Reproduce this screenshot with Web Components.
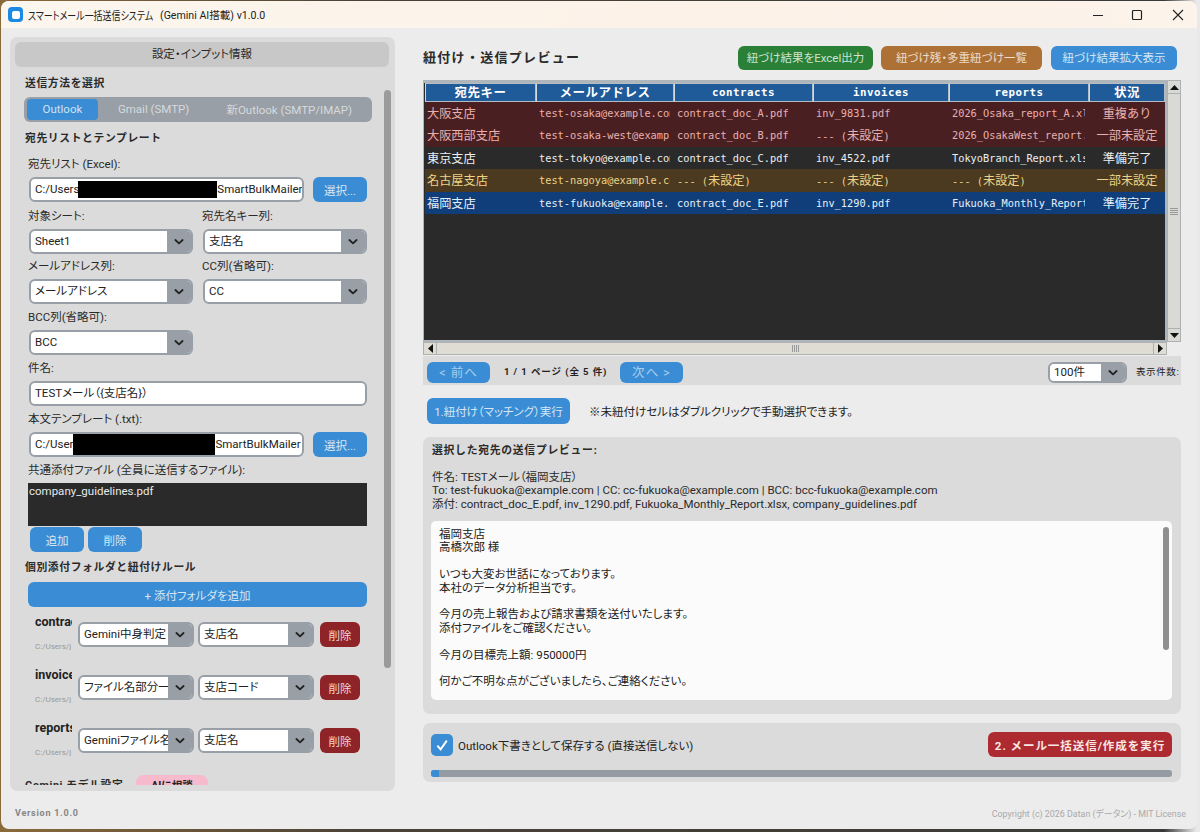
<!DOCTYPE html>
<html lang="ja">
<head>
<meta charset="utf-8">
<title>スマートメール一括送信システム</title>
<style>
html, body { margin: 0; height: 100%; }
body {
    width: 1200px; height: 832px; overflow: hidden;
    background: linear-gradient(90deg, #8a6a3a 0, #4a4238 30%, #3a3a38 97%, #e9e9e9 99.7%);
    font: 11.5px Roboto, "Noto Sans CJK JP", sans-serif;
    color: #222;
}
</style>
</head>
<body>
<app-window></app-window>
<script>
const FONT = 'Roboto, "Noto Sans CJK JP", sans-serif';
const CHEVRON = '<svg width="10" height="6" viewBox="0 0 10 6"><path d="M1.4 1 5 4.4 8.6 1" fill="none" stroke="#222" stroke-width="1.8" stroke-linecap="round" stroke-linejoin="round"/></svg>';

function define(name, css, html) {
    customElements.define(name, class extends HTMLElement {
        connectedCallback() {
            if (this.shadowRoot) return;
            this.attachShadow({ mode: "open" });
            const template = document.createElement("template");
            const markup = typeof html === "function" ? html(this) : html;
            template.innerHTML = `<style>${css}</style>${markup}`;
            this.shadowRoot.appendChild(template.content.cloneNode(true));
        }
    });
}

/* 共通部品 */
define("ui-btn", `
    :host { display: inline-flex; align-items: center; justify-content: center; height: 25px; box-sizing: border-box;
        border-radius: 6px; background: var(--bg, #3a8dd4); color: var(--fg, #d5e6f5); font-size: 11.5px; white-space: nowrap; font-feature-settings: "palt"; }
`, `<slot></slot>`);

define("ui-select", `
    :host { display: flex; height: 25px; box-sizing: border-box; border: 2px solid #989fa6; border-radius: 6px;
        background: #fff; overflow: hidden; font-size: 11.5px; color: #222; font-feature-settings: "palt"; }
    .v { flex: 1; min-width: 0; padding-left: 4px; line-height: var(--lh, 21px); white-space: nowrap; overflow: hidden; }
    .a { width: 24px; flex: none; background: #989fa6; display: flex; align-items: center; justify-content: center; }
`, host => `<div class="v">${host.getAttribute("value")}</div><div class="a">${CHEVRON}</div>`);

define("ui-field", `
    :host { display: flex; height: 25px; box-sizing: border-box; border: 2px solid #989fa6; border-radius: 6px;
        background: #fff; overflow: hidden; font-size: 11.5px; color: #222; line-height: 20px; padding-left: 4px; white-space: nowrap; font-feature-settings: "palt"; }
`, `<slot></slot>`);

define("sec-label", `
    :host { display: block; height: 14px; line-height: 16px; font-size: 10.8px; font-weight: 700; letter-spacing: .62px; color: #2a2a2a; white-space: nowrap; }
`, `<slot></slot>`);

define("fld-label", `
    :host { display: block; height: 14px; line-height: 14px; font-size: 11.5px; color: #2a2a2a; white-space: nowrap; font-feature-settings: "palt"; }
`, `<slot></slot>`);

define("seg-tabs", `
    :host { display: flex; height: 25px; box-sizing: border-box; padding: 2px 3px; background: #989fa6; border-radius: 6px; font-size: 11.5px; color: #d6dadd; font-feature-settings: "palt"; }
    div { display: flex; align-items: center; justify-content: center; border-radius: 4px; padding-bottom: 2px; box-sizing: border-box; }
    .on { width: 71px; background: #3a8dd4; color: #cfe2f3; }
    .g { width: 112px; }
    .n { width: 160px; }
`, `<div class="on">Outlook</div><div class="g">Gmail (SMTP)</div><div class="n">新Outlook (SMTP/IMAP)</div>`);

define("rule-row", `
    :host { display: flex; height: 41px; padding-left: 10px; }
    .n { width: 37px; overflow: hidden; white-space: nowrap; flex: none; }
    .t { height: 16px; line-height: 16px; font-size: 12.5px; font-weight: 700; color: #222; }
    .p { margin-top: 10px; height: 14px; line-height: 14px; font-size: 8px; color: #999; }
    .s { display: flex; margin: 8px 0 0 6px; height: 25px; }
    ui-select { width: 116px; }
    ui-select + ui-select { margin-left: 4px; }
    ui-btn { width: 40px; margin-left: 6px; --bg: #8f2428; --fg: #f0d5d5; }
`, host => `<div class="n"><div class="t">${host.getAttribute("name")}</div><div class="p">C:/Users/j</div></div>
    <div class="s"><ui-select value="${host.getAttribute("kind")}"></ui-select><ui-select value="${host.getAttribute("key")}"></ui-select><ui-btn>削除</ui-btn></div>`);

/* タイトルバー */
define("title-bar", `
    :host { display: flex; align-items: center; height: 27px; flex: none; background: linear-gradient(90deg, #fbf6ee, #fdf2e8 60%, #fcf3ea);
        font-size: 11.5px; color: #222; font-feature-settings: "palt"; }
    .ic { width: 15px; height: 15px; margin-left: 7px; border-radius: 4px; background: #1a8ae5; display: flex; align-items: center; justify-content: center; }
    .ic i { width: 8px; height: 8px; border-radius: 2px; background: #fff; }
    .t { margin-left: 5px; white-space: nowrap; flex: 1; display: flex; align-items: center; }
    /* カナ部分は実物だと詰まって見えるので横だけ縮める */
    .t b { font-weight: 400; width: 131px; display: block; transform: scaleX(.78); transform-origin: left center; margin-right: 1px; }
    .t span { font-size: 10.6px; }
    svg { display: block; }
    .c { display: flex; align-items: center; }
`, `<div class="ic"><i></i></div><div class="t"><b>スマートメール一括送信システム</b><span>(Gemini AI搭載) v1.0.0</span></div>
    <div class="c">
      <svg width="12" height="12" viewBox="0 0 12 12" style="margin-right:27px"><path d="M1 6.5h10" stroke="#222" stroke-width="1.2"/></svg>
      <svg width="12" height="12" viewBox="0 0 12 12" style="margin-right:29px"><rect x="1.5" y="1.5" width="9" height="9" rx="1" fill="none" stroke="#222" stroke-width="1.2"/></svg>
      <svg width="12" height="12" viewBox="0 0 12 12" style="margin-right:13px"><path d="M1 1l10 10M11 1 1 11" stroke="#222" stroke-width="1.1"/></svg>
    </div>`);

/* 左パネル */
define("settings-panel", `
    :host { display: flex; flex-direction: column; position: relative; width: 385px; height: 754px; box-sizing: border-box;
        padding: 5px 6px 6px 5px; background: #dbdbdb; border-radius: 7px; flex: none; }
    .head { height: 25px; flex: none; box-sizing: border-box; padding-bottom: 3px; background: #c8c8c8; border-radius: 6px; display: flex; align-items: center; justify-content: center;
        font-size: 11.5px; color: #2a2a2a; font-feature-settings: "palt"; }
    .body { flex: 1; min-height: 0; overflow: hidden; padding-left: 10px; padding-right: 12px; }
    .body > * { margin-top: 6px; }
    .in { margin-left: 4px; width: 338px; }
    .two { display: grid; grid-template-columns: 164px 164px; column-gap: 10px; margin-left: 4px; }
    .lab { margin-left: 3px; grid-template-columns: 174px 164px; column-gap: 0; }
    .row { display: flex; gap: 9px; margin-left: 4px; }
    .row ui-field { width: 275px; flex: none; }
    .row ui-btn { width: 54px; }
    .bar { display: inline-block; flex: none; background: #000; }
    .list { height: 43px; width: 339px; margin-left: 3px; background: #2a2a2a; color: #e8e8e8; font-size: 11.5px; line-height: 14px; padding: 1px; box-sizing: border-box; }
    .pair { display: flex; gap: 4px; margin-left: 5px; margin-top: 1px !important; }
    .pair ui-btn { width: 54px; }
    .add { display: flex; width: 339px; margin-left: 3px; margin-top: 8px !important; }
    .gem { display: flex; align-items: flex-start; margin-top: 14px !important; }
    .gem sec-label { width: 111px; margin-top: 3px; }
    .pill { width: 72px; height: 18px; border-radius: 8px; background: #f7b9cc; display: flex; align-items: center; justify-content: center; font-size: 10.5px; font-weight: 700; color: #222; }
    .sb { position: absolute; left: 374px; top: 53px; width: 7px; height: 578px; border-radius: 4px; background: #9b9b9b; }
`, `
    <div class="head">設定・インプット情報</div>
    <div class="body">
      <sec-label style="margin-top:9px">送信方法を選択</sec-label>
      <seg-tabs style="margin-top:7px;width:348px;margin-left:-1px"></seg-tabs>
      <sec-label style="margin-top:9px">宛先リストとテンプレート</sec-label>
      <fld-label style="margin:12px 0 0 3px">宛先リスト (Excel):</fld-label>
      <div class="row">
        <ui-field>C:/Users<span class="bar" style="width:139px;margin-top:2px;height:17px;margin-left:-1px"></span>SmartBulkMailer</ui-field>
        <ui-btn>選択...</ui-btn>
      </div>
      <div class="two lab" style="margin-top:7px">
        <fld-label>対象シート:</fld-label><fld-label>宛先名キー列:</fld-label>
      </div>
      <div class="two">
        <ui-select value="Sheet1"></ui-select><ui-select value="支店名"></ui-select>
      </div>
      <div class="two lab" style="margin-top:5px">
        <fld-label>メールアドレス列:</fld-label><fld-label>CC列(省略可):</fld-label>
      </div>
      <div class="two">
        <ui-select value="メールアドレス"></ui-select><ui-select value="CC"></ui-select>
      </div>
      <fld-label style="margin-left:3px">BCC列(省略可):</fld-label>
      <ui-select value="BCC" style="width:164px;margin-left:4px"></ui-select>
      <fld-label style="margin-left:3px">件名:</fld-label>
      <ui-field class="in">TESTメール（{支店名}）</ui-field>
      <fld-label style="margin-left:3px">本文テンプレート (.txt):</fld-label>
      <div class="row">
        <ui-field>C:/User<span class="bar" style="width:142px;margin-top:-2px;height:23px"></span>SmartBulkMailer</ui-field>
        <ui-btn>選択...</ui-btn>
      </div>
      <fld-label style="margin-left:3px">共通添付ファイル (全員に送信するファイル):</fld-label>
      <div class="list">company_guidelines.pdf</div>
      <div class="pair"><ui-btn>追加</ui-btn><ui-btn>削除</ui-btn></div>
      <sec-label style="margin-top:8px">個別添付フォルダと紐付けルール</sec-label>
      <div class="add"><ui-btn style="flex:1">+ 添付フォルダを追加</ui-btn></div>
      <rule-row name="contracts" kind="Gemini中身判定" key="支店名" style="margin-top:7px"></rule-row>
      <rule-row name="invoices" kind="ファイル名部分一致" key="支店コード" style="margin-top:12px"></rule-row>
      <rule-row name="reports" kind="Geminiファイル名" key="支店名" style="margin-top:12px"></rule-row>
      <div class="gem"><sec-label>Gemini モデル設定</sec-label><div class="pill">AIに相談</div></div>
    </div>
    <div class="sb"></div>
`);

/* 紐付けテーブル */
const COLS = ["宛先キー", "メールアドレス", "contracts", "invoices", "reports", "状況"];
const ROWS = [
    ["r", "大阪支店", "test-osaka@example.com", "contract_doc_A.pdf", "inv_9831.pdf", "2026_Osaka_report_A.xlsx", "重複あり"],
    ["r", "大阪西部支店", "test-osaka-west@example.com", "contract_doc_B.pdf", "--- (未設定)", "2026_OsakaWest_report.xlsx", "一部未設定"],
    ["k", "東京支店", "test-tokyo@example.com", "contract_doc_C.pdf", "inv_4522.pdf", "TokyoBranch_Report.xlsx", "準備完了"],
    ["y", "名古屋支店", "test-nagoya@example.com", "--- (未設定)", "--- (未設定)", "--- (未設定)", "一部未設定"],
    ["b", "福岡支店", "test-fukuoka@example.com", "contract_doc_E.pdf", "inv_1290.pdf", "Fukuoka_Monthly_Report.xlsx", "準備完了"],
];
const jp = s => s.replace(/[^\x00-\x7f]+/g, m => `<span class="j">${m}</span>`);

define("match-table", `
    :host { display: block; position: relative; width: 758px; height: 275px; flex: none; }
    .frame { position: absolute; left: 0; top: 0; width: 744px; height: 262px; box-sizing: border-box; padding: 2px 0 2px 1px; background: #2a2a2a;
        border: 1px solid #aeb5bb; border-width: 1px 2px 2px 1px; overflow: hidden; }
    .top { position: absolute; left: 0; top: 0; right: 0; height: 2px; background: #aeb5bb; }
    .grid { display: grid; grid-template-columns: 111px 138px 139px 136px 140px 76px; font: 10.3px/22.4px "DejaVu Sans Mono", "Noto Sans CJK JP", monospace; }
    .h { height: 19px; line-height: 17px; box-sizing: border-box; background: #1f5a99; color: #fff; font-weight: 700; text-align: center; font-size: 10.8px; letter-spacing: .5px;
        border: 1px solid #b4bcc4; border-left-color: #d5d9dc; }
    .h .j { font-size: 12.5px; letter-spacing: .5px; }
    .c { height: 22.4px; overflow: hidden; white-space: nowrap; }
    .c i { display: block; font-style: normal; margin: 0 4px 0 3px; overflow: hidden; }
    .c .j { font-family: "Noto Sans CJK JP", sans-serif; font-size: 12.2px; }
    .c.f i { margin-left: 2px; }
    .c.s i { margin: 0; text-align: center; }
    .r { background: #4a1f22; color: #e9b0ad; }
    .k { background: #2a2a2a; color: #eeeeee; }
    .y { background: #4b3a1f; color: #ecd38a; }
    .b { background: #0f3e7a; color: #e6f0fa; }
    .vs { position: absolute; left: 744px; top: 0; width: 14px; height: 262px; box-sizing: border-box; background: #d9d9d6; border: 1px solid #aeb1b2; display: flex; flex-direction: column; }
    .hs { position: absolute; left: 0; top: 262px; width: 744px; height: 13px; box-sizing: border-box; background: #dfdcd4; border: 1px solid #aeb1b2; display: flex; align-items: center; }
    .ab { flex: none; display: flex; align-items: center; justify-content: center; }
    .vs .ab { height: 12px; border-bottom: 1px solid #aeb1b2; }
    .vs .ab.e { border-bottom: 0; border-top: 1px solid #aeb1b2; }
    .hs .ab { width: 12px; height: 100%; border-right: 1px solid #aeb1b2; }
    .hs .ab.e { border-right: 0; border-left: 1px solid #aeb1b2; }
    .sp { flex: 1; display: flex; align-items: center; justify-content: center; }
    .gh { width: 7px; height: 7px; background: repeating-linear-gradient(90deg, #999 0 1px, transparent 1px 2px); }
    .gv { width: 8px; height: 7px; background: repeating-linear-gradient(0deg, #999 0 1px, transparent 1px 2px); }
`, `
    <div class="frame"><div class="top"></div><div class="grid">
      ${COLS.map(c => `<div class="h">${jp(c)}</div>`).join("")}
      ${ROWS.map(r => r.slice(1).map((v, i) => `<div class="c ${r[0]} ${i == 5 ? "s" : ""} ${i == 0 ? "f" : ""}"><i>${jp(v)}</i></div>`).join("")).join("")}
    </div></div>
    <div class="vs">
      <div class="ab"><svg width="9" height="5"><path d="M0 5h9L4.5 0z" fill="#111"/></svg></div>
      <div class="sp"><div class="gv"></div></div>
      <div class="ab e"><svg width="9" height="5"><path d="M0 0h9L4.5 5z" fill="#111"/></svg></div>
    </div>
    <div class="hs">
      <div class="ab"><svg width="5" height="9"><path d="M5 0v9L0 4.5z" fill="#111"/></svg></div>
      <div class="sp"><div class="gh"></div></div>
      <div class="ab e"><svg width="5" height="9"><path d="M0 0v9l5-4.5z" fill="#111"/></svg></div>
    </div>
`);

define("pager-bar", `
    :host { display: flex; align-items: flex-start; width: 758px; height: 29px; margin-top: 1px; box-sizing: border-box; padding: 6px 1px 0 4px; background: #dbdbdb; flex: none; }
    ui-btn { width: 63px; height: 21px; --fg: #a9cdee; font-size: 12.5px; letter-spacing: 1px; padding-bottom: 2px; box-sizing: border-box; }
    .p { margin: 3px 0 0 14px; width: 116px; line-height: 13px; font-size: 9.5px; font-weight: 700; letter-spacing: .9px; white-space: nowrap; color: #222; }
    .sp { flex: 1; }
    ui-select { width: 79px; height: 21px; --lh: 17px; }
    .l { margin: 3px 0 0 9px; line-height: 13px; font-size: 9.5px; letter-spacing: 0.6px; width: 44px; white-space: nowrap; color: #222; }
`, `<ui-btn>&lt; 前へ</ui-btn><div class="p">1 / 1 ページ (全 5 件)</div><ui-btn>次へ &gt;</ui-btn><div class="sp"></div>
    <ui-select value="100件"></ui-select><div class="l">表示件数:</div>`);

define("mail-preview", `
    :host { display: block; width: 758px; height: 277px; margin-top: 13px; box-sizing: border-box; padding: 6px 8px 0 9px; background: #dbdbdb; border-radius: 7px; position: relative; flex: none; }
    .h { height: 14px; line-height: 16px; font-size: 10.8px; font-weight: 700; letter-spacing: .75px; color: #2a2a2a; }
    .m { margin-top: 14px; font-size: 11.5px; line-height: 13.4px; color: #2a2a2a; white-space: nowrap; font-feature-settings: "palt"; }
    .box { position: absolute; left: 8px; top: 84px; width: 741px; height: 179px; box-sizing: border-box; background: #fbfbfb; border-radius: 5px; padding: 7px 8px; font-size: 11.5px; line-height: 13.4px; color: #222; white-space: pre; overflow: hidden; font-feature-settings: "palt"; }
    .sb { position: absolute; right: 3px; top: 6px; width: 6px; height: 123px; border-radius: 3px; background: #8f8f8f; }
`, `<div class="h">選択した宛先の送信プレビュー:</div>
    <div class="m">件名: TESTメール（福岡支店）<br>To: test-fukuoka@example.com | CC: cc-fukuoka@example.com | BCC: bcc-fukuoka@example.com<br>添付: contract_doc_E.pdf, inv_1290.pdf, Fukuoka_Monthly_Report.xlsx, company_guidelines.pdf</div>
    <div class="box">福岡支店
高橋次郎 様

いつも大変お世話になっております。
本社のデータ分析担当です。

今月の売上報告および請求書類を送付いたします。
添付ファイルをご確認ください。

今月の目標売上額: 950000円

何かご不明な点がございましたら、ご連絡ください。<div class="sb"></div></div>`);

define("send-panel", `
    :host { display: block; width: 758px; height: 59px; margin-top: 9px; box-sizing: border-box; padding: 9px 9px 0 8px; background: #dbdbdb; border-radius: 7px; flex: none; }
    .t { display: flex; align-items: center; height: 25px; }
    .cb { width: 22px; height: 22px; margin-left: 0; border-radius: 5px; background: #3a8dd4; display: flex; align-items: center; justify-content: center; }
    .l { margin-left: 5px; font-size: 11.5px; flex: 1; color: #222; white-space: nowrap; font-feature-settings: "palt"; }
    ui-btn { width: 184px; --bg: #ad2a30; --fg: #f8e6e6; font-weight: 700; font-size: 11.5px; letter-spacing: .95px; font-feature-settings: normal; }
    .pg { margin-top: 13px; height: 7px; border-radius: 3px; background: #949ba3; overflow: hidden; }
    .pg i { display: block; width: 8px; height: 7px; background: #3a8dd4; }
`, `<div class="t"><div class="cb"><svg width="14" height="14" viewBox="0 0 14 14"><path d="M2.4 7.6 5.6 11.4 11.8 2.6" fill="none" stroke="#fff" stroke-width="1.9"/></svg></div>
    <div class="l">Outlook下書きとして保存する (直接送信しない)</div><ui-btn>2. メール一括送信/作成を実行</ui-btn></div>
    <div class="pg"><i></i></div>`);

define("preview-pane", `
    :host { display: flex; flex-direction: column; width: 758px; margin-left: 28px; flex: none; }
    .top { display: flex; align-items: center; height: 24px; margin-top: 9px; padding-right: 4px; flex: none; }
    h2 { flex: 1; margin: 0 0 3px; font-size: 13px; font-weight: 700; letter-spacing: 1.3px; color: #2a2a2a; white-space: nowrap; }
    .top ui-btn { height: 24px; margin-left: 8px; padding-bottom: 2px; box-sizing: border-box; }
    .go { display: flex; align-items: center; height: 26px; margin-top: 13px; padding-left: 4px; flex: none; }
    .go ui-btn { width: 143px; height: 26px; }
    .go span { margin-left: 19px; font-size: 11.5px; color: #222; white-space: nowrap; font-feature-settings: "palt"; }
`, `<div class="top"><h2>紐付け・送信プレビュー</h2>
      <ui-btn style="width:135px;--bg:#2a8036;--fg:#cfe3d2">紐づけ結果をExcel出力</ui-btn>
      <ui-btn style="width:161px;--bg:#ad7136;--fg:#ecdcc9">紐づけ残・多重紐づけ一覧</ui-btn>
      <ui-btn style="width:126px;margin-left:9px">紐づけ結果拡大表示</ui-btn></div>
    <match-table style="margin-top:10px"></match-table>
    <pager-bar></pager-bar>
    <div class="go"><ui-btn>1.紐付け（マッチング）実行</ui-btn><span>※未紐付けセルはダブルクリックで手動選択できます。</span></div>
    <mail-preview></mail-preview>
    <send-panel></send-panel>`);

define("app-window", `
    :host { display: flex; flex-direction: column; width: 1196px; height: 828px; margin: 1px 0 0 1px; background: #ececec; border-radius: 8px; overflow: hidden; font-family: ${FONT}; }
    .main { display: flex; padding: 9px 0 0 9px; flex: none; }
    .foot { flex: 1; display: flex; align-items: center; justify-content: space-between; padding: 6px 11px 0 14px; }
    .v { font-size: 9px; font-weight: 700; letter-spacing: .75px; color: #858585; }
    .cr { font-size: 8.9px; color: #a9a9a9; font-feature-settings: "palt"; }
`, `<title-bar></title-bar>
    <div class="main"><settings-panel></settings-panel><preview-pane></preview-pane></div>
    <div class="foot"><span class="v">Version 1.0.0</span><span class="cr">Copyright (c) 2026 Datan (データン) - MIT License</span></div>`);
</script>
</body>
</html>
